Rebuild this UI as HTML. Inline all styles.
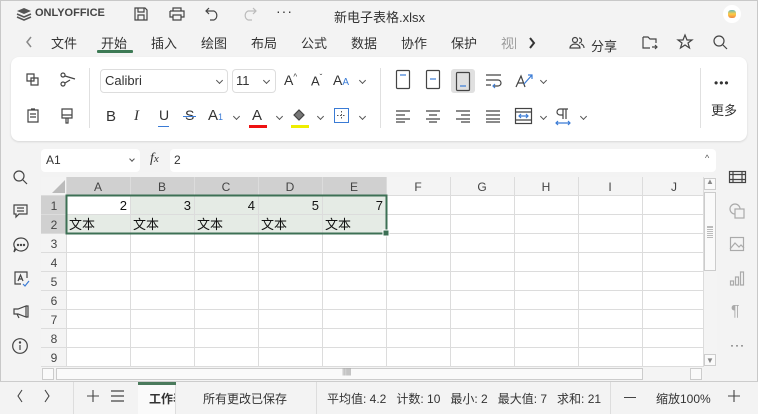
<!DOCTYPE html>
<html><head><meta charset="utf-8"><style>
*{margin:0;padding:0;box-sizing:border-box}
body{width:758px;height:414px;overflow:hidden;background:#f3f3f3;font-family:"Liberation Sans","Noto Sans CJK SC",sans-serif;color:#333;position:relative;font-size:13px}
.a{position:absolute}
.t{position:absolute;white-space:nowrap}
svg{position:absolute;overflow:visible}
.ic{stroke:#444;fill:none;stroke-width:1.2}
.dd{position:absolute;width:5px;height:5px;border-right:1px solid #555;border-bottom:1px solid #555;transform:rotate(45deg)}
</style></head><body>
<div class="a" style="left:0;top:0;width:758px;height:414px;border:1px solid #c8c8c8"></div>
<!-- title bar -->
<svg style="left:17px;top:8px" width="14" height="12"><path d="M7 0L14 3L7 6L0 3Z" fill="#555"/><path d="M0 6L7 9L14 6M0 9L7 12L14 9" stroke="#555" fill="none" stroke-width="1.5"/></svg>
<div class="t" style="left:35px;top:7px;font-size:11px;font-weight:bold;color:#444">ONLYOFFICE</div>
<svg class="ic" style="left:134px;top:7px" width="14" height="14"><path d="M1 1H11L13 3V13H1Z M4 1V5H10V1 M4 13V8H10V13"/></svg>
<svg class="ic" style="left:169px;top:7px" width="16" height="14"><path d="M4 4V1H12V4 M1 4H15V10H12 M4 10H1V4 M4 8H12V13H4Z"/></svg>
<svg class="ic" style="left:205px;top:7px" width="15" height="14"><path d="M4 1L1 4L4 7 M1 4H9A5 5 0 0 1 9 13H5"/></svg>
<svg class="ic" style="left:242px;top:7px;stroke:#bbb" width="15" height="14"><path d="M11 1L14 4L11 7 M14 4H6A5 5 0 0 0 6 13H10"/></svg>
<div class="t" style="left:276px;top:3px;font-size:14px;letter-spacing:1px">···</div>
<div class="t" style="left:334px;top:7px;font-size:13px;color:#333">新电子表格.xlsx</div>
<div class="a" style="left:723px;top:5px;width:18px;height:18px;border-radius:9px;background:#fff"></div>
<div class="a" style="left:728px;top:10px;width:8px;height:8px;border-radius:3px;background:linear-gradient(#6bb 0,#fc4 50%,#e84 100%)"></div>
<!-- tabs -->
<svg style="left:26px;top:37px" width="6" height="10"><path d="M5 0L1 5L5 10" stroke="#888" stroke-width="1.5" fill="none"/></svg>
<div class="t" style="left:51px;top:33px;font-size:13px">文件</div>
<div class="t" style="left:101px;top:33px;font-size:13px">开始</div>
<div class="a" style="left:97px;top:50px;width:36px;height:3px;background:#3d7a55;border-radius:1px"></div>
<div class="t" style="left:151px;top:33px;font-size:13px">插入</div>
<div class="t" style="left:201px;top:33px;font-size:13px">绘图</div>
<div class="t" style="left:251px;top:33px;font-size:13px">布局</div>
<div class="t" style="left:301px;top:33px;font-size:13px">公式</div>
<div class="t" style="left:351px;top:33px;font-size:13px">数据</div>
<div class="t" style="left:401px;top:33px;font-size:13px">协作</div>
<div class="t" style="left:451px;top:33px;font-size:13px">保护</div>
<div class="t" style="left:501px;top:33px;font-size:13px;color:#999">视图</div>
<div class="a" style="left:516px;top:30px;width:14px;height:22px;background:#f3f3f3"></div>
<svg style="left:529px;top:38px" width="6" height="10"><path d="M1 0L5 5L1 10" stroke="#333" stroke-width="2" fill="none"/></svg>
<svg class="ic" style="left:570px;top:37px" width="14" height="12"><circle cx="5" cy="3" r="2.5"/><path d="M0 11A5 4 0 0 1 10 11Z M9 1A2.5 2.5 0 0 1 9 6 M11 7A4 4 0 0 1 14 11"/></svg>
<div class="t" style="left:591px;top:36px;font-size:13px">分享</div>
<svg class="ic" style="left:642px;top:35px" width="16" height="16"><path d="M1 2H6L8 4H14V8 M1 2V13H8 M10 12H15 M13 10L15 12L13 14" /></svg>
<svg class="ic" style="left:677px;top:34px" width="16" height="15"><path d="M8 1L10 6H15L11 9L12.5 14L8 11L3.5 14L5 9L1 6H6Z"/></svg>
<svg class="ic" style="left:713px;top:35px" width="15" height="15"><circle cx="6" cy="6" r="5"/><path d="M10 10L14 14"/></svg>
<!-- toolbar panel -->
<div class="a" style="left:11px;top:57px;width:736px;height:84px;background:#fff;border-radius:8px;box-shadow:0 1px 2px rgba(0,0,0,.12)"></div>
<svg class="ic" style="left:26px;top:73px" width="14" height="14"><path d="M1 1H8V8H1Z M5 5H12V12H5Z" fill="#fff"/></svg>
<svg class="ic" style="left:60px;top:72px" width="16" height="16"><circle cx="3" cy="3" r="2"/><circle cx="3" cy="12" r="2"/><path d="M5 4L15 7 M5 11L10 8"/></svg>
<svg class="ic" style="left:27px;top:108px" width="12" height="15"><path d="M1 2H11V14H1Z M3 6H9 M3 9H9 M4 1H8"/></svg>
<svg class="ic" style="left:61px;top:108px" width="12" height="16"><path d="M1 1H11V10H1Z M1 7H11 M5 10V15H7V10"/></svg>
<div class="a" style="left:89px;top:68px;width:1px;height:60px;background:#e0e0e0"></div>
<div class="a" style="left:100px;top:69px;width:128px;height:24px;border:1px solid #ddd;border-radius:4px"></div>
<div class="t" style="left:105px;top:73px;font-size:13px">Calibri</div>
<div class="dd" style="left:217px;top:78px"></div>
<div class="a" style="left:232px;top:69px;width:44px;height:24px;border:1px solid #ddd;border-radius:4px"></div>
<div class="t" style="left:236px;top:73px;font-size:13px">11</div>
<div class="dd" style="left:264px;top:78px"></div>
<div class="t" style="left:284px;top:72px;font-size:14px">A<sup style="font-size:8px">^</sup></div>
<div class="t" style="left:311px;top:73px;font-size:13px">A<sup style="font-size:8px">ˇ</sup></div>
<div class="t" style="left:333px;top:72px;font-size:14px">A<span style="font-size:10px;color:#3a7bd5">A</span></div>
<div class="dd" style="left:360px;top:78px"></div>
<div class="t" style="left:106px;top:108px;font-size:15px">B</div>
<div class="t" style="left:134px;top:108px;font-size:15px;font-style:italic;font-family:'Liberation Serif',serif">I</div>
<div class="t" style="left:159px;top:107px;font-size:14px">U</div>
<div class="a" style="left:158px;top:126px;width:11px;height:1px;background:#3a7bd5"></div>
<div class="t" style="left:185px;top:107px;font-size:14px">S</div>
<div class="a" style="left:183px;top:116px;width:13px;height:1px;background:#3a7bd5"></div>
<div class="t" style="left:208px;top:107px;font-size:15px">A<span style="font-size:9px;color:#3a7bd5">1</span></div>
<div class="dd" style="left:234px;top:114px"></div>
<div class="t" style="left:252px;top:107px;font-size:15px">A</div>
<div class="a" style="left:249px;top:125px;width:18px;height:3px;background:#e11"></div>
<div class="dd" style="left:277px;top:114px"></div>
<svg class="ic" style="left:291px;top:108px" width="16" height="14"><path d="M3 7L8 2L13 7L8 12Z" fill="#777"/></svg>
<div class="a" style="left:291px;top:125px;width:18px;height:3px;background:#ee0"></div>
<div class="dd" style="left:318px;top:114px"></div>
<svg style="left:334px;top:108px" width="15" height="15"><rect x="0.5" y="0.5" width="14" height="14" fill="none" stroke="#3a7bd5"/><path d="M7.5 3V12M3 7.5H12" stroke="#555" stroke-dasharray="1.5 1.5"/></svg>
<div class="dd" style="left:360px;top:114px"></div>
<div class="a" style="left:380px;top:68px;width:1px;height:60px;background:#e0e0e0"></div>
<svg class="ic" style="left:396px;top:70px" width="14" height="19"><rect x="0.5" y="0.5" width="13" height="18" rx="1"/><path d="M4 5H10" stroke="#3a7bd5"/></svg>
<svg class="ic" style="left:426px;top:70px" width="14" height="19"><rect x="0.5" y="0.5" width="13" height="18" rx="1"/><path d="M4 9H10" stroke="#3a7bd5"/></svg>
<div class="a" style="left:451px;top:69px;width:24px;height:24px;background:#e0e0e0;border-radius:3px"></div>
<svg class="ic" style="left:456px;top:72px" width="14" height="19"><rect x="0.5" y="0.5" width="13" height="18" rx="1"/><path d="M4 14H10" stroke="#3a7bd5"/></svg>
<svg class="ic" style="left:486px;top:74px" width="16" height="14"><path d="M0 1H15 M0 6H12A3 3 0 0 1 12 12H8 M0 11H5" /><path d="M9 10L7 12L9 14" stroke="#3a7bd5"/></svg>
<svg class="ic" style="left:515px;top:73px" width="18" height="16"><path d="M1 14L6 3L10 14 M3 10H8"/><path d="M9 11L17 2 M13 2H17V6" stroke="#3a7bd5"/></svg>
<div class="dd" style="left:541px;top:78px"></div>
<svg class="ic" style="left:396px;top:110px" width="14" height="12"><path d="M0 1H14M0 5H9M0 9H14M0 12H9"/></svg>
<svg class="ic" style="left:426px;top:110px" width="14" height="12"><path d="M0 1H14M3 5H11M0 9H14M3 12H11"/></svg>
<svg class="ic" style="left:456px;top:110px" width="14" height="12"><path d="M0 1H14M5 5H14M0 9H14M5 12H14"/></svg>
<svg class="ic" style="left:486px;top:110px" width="14" height="12"><path d="M0 1H14M0 5H14M0 9H14M0 12H14"/></svg>
<svg class="ic" style="left:515px;top:108px" width="17" height="16"><rect x="0.5" y="0.5" width="16" height="15"/><path d="M0 4H17M0 12H17" /><path d="M4 8H13M6 6L4 8L6 10M11 6L13 8L11 10" stroke="#3a7bd5"/></svg>
<div class="dd" style="left:541px;top:114px"></div>
<svg class="ic" style="left:555px;top:108px" width="16" height="17"><path d="M5 1H13 M8 1V11 M11 1V11 M5 1A3 3 0 0 0 5 7H8"/><path d="M1 15H15M3 13L1 15L3 17M13 13L15 15L13 17" stroke="#3a7bd5"/></svg>
<div class="dd" style="left:581px;top:114px"></div>
<div class="a" style="left:700px;top:68px;width:1px;height:60px;background:#e0e0e0"></div>
<div class="t" style="left:714px;top:76px;font-size:12px;letter-spacing:1px">•••</div>
<div class="t" style="left:711px;top:100px;font-size:13px">更多</div>
<!-- formula bar -->
<div class="a" style="left:41px;top:149px;width:99px;height:23px;background:#fff;border-radius:4px"></div>
<div class="t" style="left:46px;top:153px;font-size:12px">A1</div>
<div class="dd" style="left:130px;top:157px;width:4px;height:4px"></div>
<div class="t" style="left:150px;top:151px;font-size:14px;font-family:'Liberation Serif',serif;font-style:italic">f<span style="font-size:11px">x</span></div>
<div class="a" style="left:170px;top:149px;width:546px;height:23px;background:#fff;border-radius:4px"></div>
<div class="t" style="left:174px;top:153px;font-size:12px">2</div>
<div class="t" style="left:705px;top:153px;font-size:9px;color:#555">^</div>
<!-- left sidebar icons -->
<svg class="ic" style="left:13px;top:170px" width="15" height="15"><circle cx="6" cy="6" r="5"/><path d="M10 10L14 14"/></svg>
<svg class="ic" style="left:13px;top:204px" width="15" height="15"><path d="M1 1H14V10H6L3 13V10H1Z M4 4H11M4 7H11"/></svg>
<svg class="ic" style="left:13px;top:237px" width="16" height="16"><path d="M8 1A7 6.5 0 1 1 3 12L1 15L2 11A7 6.5 0 0 1 8 1Z"/><circle cx="5" cy="8" r=".6" fill="#444"/><circle cx="8" cy="8" r=".6" fill="#444"/><circle cx="11" cy="8" r=".6" fill="#444"/></svg>
<svg class="ic" style="left:14px;top:271px" width="16" height="17"><path d="M10 1H1V13H7 M13 7V1H10"/><path d="M4 10L6.5 4L9 10M5 8H8" /><path d="M9 13L11 15L15 10" stroke="#3a7bd5"/></svg>
<svg class="ic" style="left:13px;top:305px" width="16" height="14"><path d="M1 4H5L13 1V12L5 9H1Z M13 1H15V12H13 M4 9L6 13"/></svg>
<svg class="ic" style="left:12px;top:338px" width="16" height="16"><circle cx="8" cy="8" r="7.3"/><path d="M8 7V12"/><circle cx="8" cy="4.5" r=".6" fill="#444"/></svg>
<!-- grid -->
<div class="a" style="left:41px;top:177px;width:663px;height:190px;background:#fff"></div>
<svg style="left:41px;top:177px" width="663" height="190">
<rect x="0" y="0" width="663" height="18" fill="#f4f4f4"/>
<rect x="0" y="18" width="25" height="172" fill="#f4f4f4"/>
<rect x="25" y="0" width="320" height="18" fill="#d0d0d0"/>
<rect x="0" y="18" width="25" height="38" fill="#d0d0d0"/>
<path d="M24 3V16H11Z" fill="#bbb"/>
<rect x="89" y="18" width="256" height="38" fill="#e5ebe5"/>
<rect x="25" y="37" width="64" height="19" fill="#e5ebe5"/>
<g stroke="#dcdcdc" stroke-width="1">
<path d="M25.5 0V190M89.5 0V190M153.5 0V190M217.5 0V190M281.5 0V190M345.5 0V190M409.5 0V190M473.5 0V190M537.5 0V190M601.5 0V190M662.5 0V190"/>
<path d="M0 18.5H663M0 37.5H663M0 56.5H663M0 75.5H663M0 94.5H663M0 113.5H663M0 132.5H663M0 151.5H663M0 170.5H663M0 189.5H663"/>
</g>
<rect x="25.5" y="18.5" width="320" height="38" fill="none" stroke="#3d7055" stroke-width="2"/>
<rect x="342" y="53" width="6" height="6" fill="#3d7055" stroke="#fff" stroke-width="1"/>
<g font-family="Liberation Sans,sans-serif" font-size="12" fill="#444" text-anchor="middle">
<text x="57" y="14">A</text><text x="121" y="14">B</text><text x="185" y="14">C</text><text x="249" y="14">D</text><text x="313" y="14">E</text><text x="377" y="14">F</text><text x="441" y="14">G</text><text x="505" y="14">H</text><text x="569" y="14">I</text><text x="633" y="14">J</text>
<text x="13" y="33">1</text><text x="13" y="52">2</text><text x="13" y="71">3</text><text x="13" y="90">4</text><text x="13" y="109">5</text><text x="13" y="128">6</text><text x="13" y="147">7</text><text x="13" y="166">8</text><text x="13" y="185">9</text>
</g>
<g font-family="Liberation Sans,sans-serif" font-size="13" fill="#111" text-anchor="end">
<text x="86" y="33">2</text><text x="150" y="33">3</text><text x="214" y="33">4</text><text x="278" y="33">5</text><text x="342" y="33">7</text>
</g>
<g font-family="Noto Sans CJK SC,sans-serif" font-size="13" fill="#111">
<text x="28" y="52">文本</text><text x="92" y="52">文本</text><text x="156" y="52">文本</text><text x="220" y="52">文本</text><text x="284" y="52">文本</text>
</g>
</svg>
<!-- vertical scrollbar -->
<div class="a" style="left:704px;top:177px;width:13px;height:190px;background:#f4f4f4"></div>
<div class="a" style="left:704px;top:178px;width:12px;height:12px;border:1px solid #ccc;background:#fafafa"></div>
<div class="t" style="left:706px;top:177px;font-size:8px;color:#888">▲</div>
<div class="a" style="left:704px;top:192px;width:12px;height:79px;border:1px solid #ccc;background:#fafafa"></div>
<div class="a" style="left:707px;top:226px;width:6px;height:12px;border-top:1px solid #bbb;border-bottom:1px solid #bbb;background:repeating-linear-gradient(#bbb 0 1px,transparent 1px 2px)"></div>
<div class="a" style="left:704px;top:354px;width:12px;height:12px;border:1px solid #ccc;background:#fafafa"></div>
<div class="t" style="left:706px;top:356px;font-size:8px;color:#888">▼</div>
<!-- horizontal scrollbar -->
<div class="a" style="left:41px;top:367px;width:663px;height:13px;background:#f4f4f4"></div>
<div class="a" style="left:42px;top:368px;width:12px;height:12px;border:1px solid #ccc;background:#fafafa"></div>
<div class="a" style="left:56px;top:368px;width:587px;height:12px;border:1px solid #ccc;background:#fafafa"></div>
<div class="t" style="left:342px;top:367px;font-size:8px;color:#aaa;letter-spacing:-1px">||||||||</div>
<div class="a" style="left:690px;top:368px;width:12px;height:12px;border:1px solid #ccc;background:#fafafa"></div>
<!-- right sidebar -->
<svg class="ic" style="left:729px;top:171px" width="17" height="12"><rect x="0.5" y="0.5" width="16" height="11"/><path d="M0 3.5H17M0 8.5H17M4 0V12M13 0V12"/></svg>
<svg class="ic" style="left:729px;top:203px;stroke:#aaa" width="16" height="16"><circle cx="6" cy="6" r="5"/><rect x="6" y="6" width="9" height="9" fill="#f3f3f3"/></svg>
<svg class="ic" style="left:730px;top:237px;stroke:#aaa" width="15" height="15"><rect x="0.5" y="0.5" width="13" height="13"/><path d="M0 12L5 6L9 10L11 8L14 11"/></svg>
<svg class="ic" style="left:730px;top:271px;stroke:#aaa" width="14" height="15"><path d="M0.5 10H3.5V14H0.5Z M5.5 6H8.5V14H5.5Z M10.5 1H13.5V14H10.5Z"/></svg>
<div class="t" style="left:731px;top:303px;font-size:16px;color:#aaa">¶</div>
<div class="t" style="left:730px;top:338px;font-size:12px;letter-spacing:1px">···</div>
<!-- status bar -->
<div class="a" style="left:0;top:381px;width:758px;height:33px;background:#f3f3f3;border-top:1px solid #ccc"></div>
<svg style="left:17px;top:390px" width="6" height="12"><path d="M5 0L1 6L5 12" stroke="#444" stroke-width="1.1" fill="none"/></svg>
<svg style="left:44px;top:390px" width="6" height="12"><path d="M1 0L5 6L1 12" stroke="#444" stroke-width="1.1" fill="none"/></svg>
<div class="a" style="left:73px;top:382px;width:1px;height:32px;background:#ddd"></div>
<svg style="left:87px;top:390px" width="12" height="12"><path d="M6 0V12M0 6H12" stroke="#444" stroke-width="1.1"/></svg>
<svg class="ic" style="left:111px;top:390px" width="13" height="12"><path d="M0 1H13M0 6H13M0 11H13"/></svg>
<div class="a" style="left:138px;top:382px;width:38px;height:32px;background:#fafafa;border-right:1px solid #ddd"></div>
<div class="a" style="left:138px;top:382px;width:38px;height:3px;background:#4a7a5c"></div>
<div class="t" style="left:149px;top:390px;font-size:12px;font-weight:bold;width:26px;overflow:hidden">工作表1</div>
<div class="t" style="left:203px;top:390px;font-size:12px">所有更改已保存</div>
<div class="a" style="left:316px;top:382px;width:1px;height:32px;background:#ddd"></div>
<div class="t" style="left:327px;top:390px;font-size:12px">平均值: 4.2&nbsp;&nbsp; 计数: 10&nbsp;&nbsp; 最小: 2&nbsp;&nbsp; 最大值: 7&nbsp;&nbsp; 求和: 21</div>
<div class="a" style="left:610px;top:382px;width:1px;height:32px;background:#ddd"></div>
<div class="a" style="left:624px;top:397px;width:12px;height:1px;background:#444"></div>
<div class="t" style="left:656px;top:390px;font-size:12px">缩放100%</div>
<svg style="left:728px;top:390px" width="12" height="12"><path d="M6 0V12M0 6H12" stroke="#444" stroke-width="1.1"/></svg>
</body></html>
